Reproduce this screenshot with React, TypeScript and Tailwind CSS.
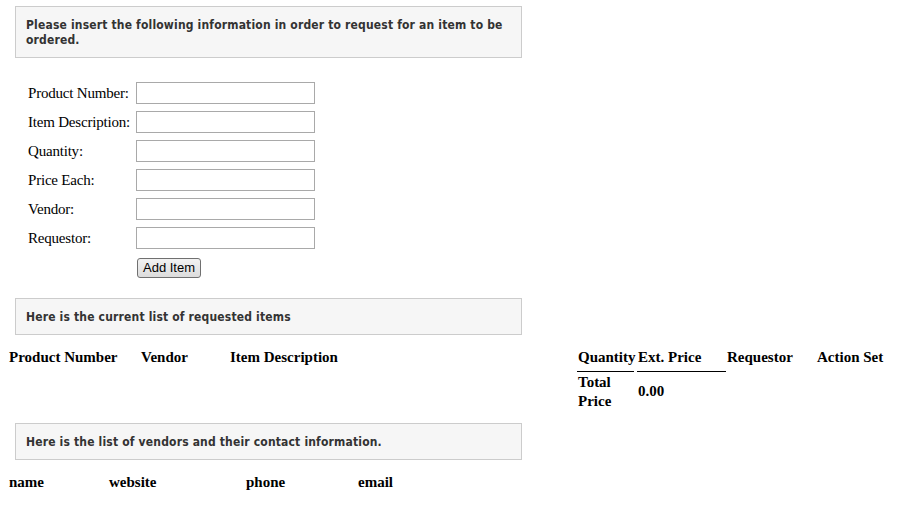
import React from "react";

const serif = { fontFamily: '"Liberation Serif", "Times New Roman", serif' };

function Notice({ children, big }: { children: React.ReactNode; big?: boolean }) {
  return (
    <div
      className={
        "ml-[15px] w-[507px] border border-[#cccccc] bg-[#f6f6f6] pl-[10px] pr-2 text-[12px] font-bold leading-[15px] tracking-[0.17px] text-[#333333] " +
        (big ? "pt-[11px] pb-[9px]" : "pt-[11px] pb-[9px]")
      }
      style={{ fontFamily: '"DejaVu Sans Condensed", "DejaVu Sans", Tahoma, sans-serif', fontStretch: "condensed" }}
    >
      {children}
    </div>
  );
}

const fields = ["Product Number:", "Item Description:", "Quantity:", "Price Each:", "Vendor:", "Requestor:"];

export default function App() {
  return (
    <div className="min-h-[519px] bg-white pt-[6px] text-black" style={serif}>
      <Notice big>
        Please insert the following information in order to request for an item to be ordered.
      </Notice>

      {/* form */}
      <div className="mt-[24px] flex flex-col gap-[7px] pl-[28px] text-[15px]">
        {fields.map((f) => (
          <div key={f} className="flex h-[22px] items-center">
            <label className="w-[108px] tracking-[-0.2px]">{f}</label>
            <input
              type="text"
              className="h-[22px] w-[179px] border border-[#a9a9a9] bg-white outline-none"
            />
          </div>
        ))}
        <div className="flex pl-[109px] pt-[2px]">
          <button
            className="h-[20px] w-[64px] rounded-[3px] border border-[#707070] bg-gradient-to-b from-[#f2f2f2] to-[#dcdcdc] text-[13px] leading-[18px] text-black"
            style={{ fontFamily: '"Liberation Sans", Arial, sans-serif' }}
          >
            Add Item
          </button>
        </div>
      </div>

      <div className="mt-[20px]">
        <Notice>Here is the current list of requested items</Notice>
      </div>

      {/* requested items table */}
      <div className="mt-[12px] ml-[8px] grid grid-cols-[132px_89px_348px_60px_89px_90px_1fr] text-[15px] font-bold leading-[19px]">
        <div className="pl-[1px] pt-[1px]">Product Number</div>
        <div className="pl-[1px] pt-[1px]">Vendor</div>
        <div className="pl-[1px] pt-[1px]">Item Description</div>
        <div className="mr-[3px] border-b border-black pl-[1px] pt-[1px] pb-[4px]">Quantity</div>
        <div className="border-b border-black pl-[1px] pt-[1px] pb-[4px]">Ext. Price</div>
        <div className="pl-[1px] pt-[1px]">Requestor</div>
        <div className="pl-[1px] pt-[1px]">Action Set</div>

        <div className="col-span-3" />
        <div className="pl-[1px] pt-[1px]">
          Total
          <br />
          Price
        </div>
        <div className="flex items-center pl-[1px]">0.00</div>
        <div className="col-span-2" />
      </div>

      <div className="mt-[12px]">
        <Notice>Here is the list of vendors and their contact information.</Notice>
      </div>

      {/* vendors table */}
      <div className="mt-[13px] ml-[8px] grid grid-cols-[100px_137px_112px_1fr] text-[15px] font-bold leading-[19px]">
        <div className="pl-[1px]">name</div>
        <div className="pl-[1px]">website</div>
        <div className="pl-[1px]">phone</div>
        <div className="pl-[1px]">email</div>
      </div>
    </div>
  );
}
